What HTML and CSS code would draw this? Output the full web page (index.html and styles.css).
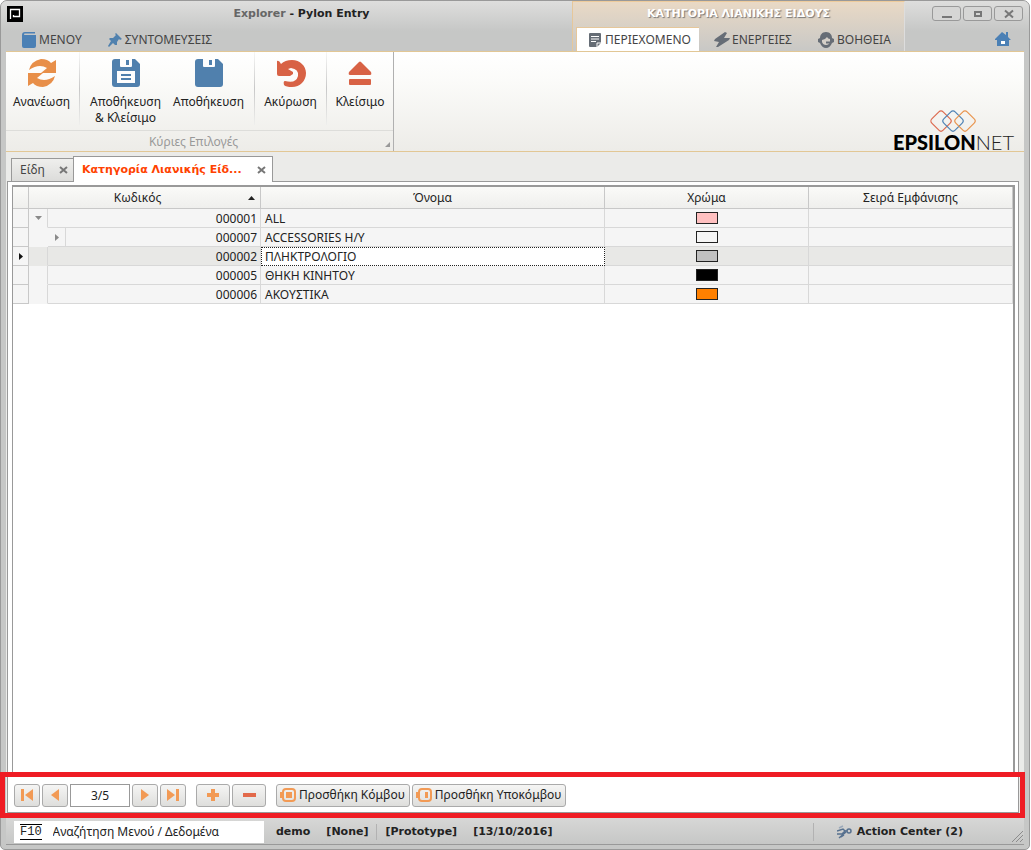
FILE: index.html
```html
<!DOCTYPE html>
<html lang="el">
<head>
<meta charset="utf-8">
<title>Explorer - Pylon Entry</title>
<link rel="stylesheet" href="styles.css">
</head>
<body>
<div class="window">
  <header class="titlebar">
    <div class="title-main">
      <div class="caption">
        <svg class="app-icon" width="16" height="16" viewBox="0 0 16 16"><rect width="16" height="16" fill="#000"/><path d="M3.500 13V3.500H12.500V10.500H6.500V9" fill="none" stroke="#fff" stroke-width="1.300"/></svg>
        <h1 class="title"><span class="title-dim">Explorer</span> - Pylon Entry</h1>
      </div>
      <nav class="tabs tabs-main">
        <button class="tab"><svg width="14" height="16" viewBox="0 0 14 16" fill="#4b80b5"><path d="M3 0H13V1.500H3C1.500 1.500 1.500 3 3 3H14V14Q14 16 12 16H2Q0 16 0 14V3Q0 0 3 0Z"/></svg>ΜΕΝΟΥ</button>
        <button class="tab"><svg width="14" height="16" viewBox="0 0 14 16" fill="#5081ae"><path d="M8 1L14 7 12 8 11 7 9 10 9 13 7 13 5 11 1 15 0 14 3 9 1 7 2 6 5 6 8 3 7 2Z"/></svg>ΣΥΝΤΟΜΕΥΣΕΙΣ</button>
      </nav>
    </div>
    <div class="context">
      <div class="context-title">ΚΑΤΗΓΟΡΙΑ ΛΙΑΝΙΚΗΣ ΕΙΔΟΥΣ</div>
      <nav class="tabs tabs-context">
        <button class="tab tab-active"><svg width="14" height="16" viewBox="0 0 14 16"><path d="M2 1H12Q13 1 13 2V11L9 15H2Q1 15 1 14V2Q1 1 2 1Z" fill="#666d76"/><path d="M3 4.500H11M3 7H11M3 9.500H8M9 15V11H13" stroke="#fff" fill="none"/></svg>ΠΕΡΙΕΧΟΜΕΝΟ</button>
        <button class="tab tab-energy"><svg width="16" height="16" viewBox="0 0 16 16" fill="#666d76"><path d="M11 0L13 1L10 6L16 6L15 8L4 15L2 15L5 10L0 9L1 7Z"/></svg>ΕΝΕΡΓΕΙΕΣ</button>
        <button class="tab"><svg width="16" height="16" viewBox="0 0 16 16"><path d="M8 0C12 0 14 3 14 6L16 7V10L14 11Q12 16 8 16Q4 16 2 11L0 10V7L2 6C2 3 4 0 8 0Z" fill="#666d76"/><path d="M4 8Q7 8 9 5Q10 7 12 7V10Q11 13 8 13Q5 13 4 10Z" fill="#d4cfc8"/><path d="M8 10.500H13" stroke="#666d76" stroke-width="2"/></svg>ΒΟΗΘΕΙΑ</button>
      </nav>
    </div>
    <div class="title-end">
      <div class="window-buttons">
        <button class="winbtn" aria-label="Ελαχιστοποίηση"><svg width="10" height="10"><path d="M0 8H10" stroke="#777" stroke-width="2"/></svg></button>
        <button class="winbtn" aria-label="Μεγιστοποίηση"><svg width="10" height="10"><rect x="2" y="3" width="6" height="4" fill="none" stroke="#777" stroke-width="2"/></svg></button>
        <button class="winbtn" aria-label="Κλείσιμο παραθύρου"><svg width="10" height="10"><path d="M1 1.500L9 8.500M9 1.500L1 8.500" stroke="#777" stroke-width="2"/></svg></button>
      </div>
      <button class="home" aria-label="Αρχική"><svg width="16" height="14" viewBox="0 0 16 14"><path d="M7 0L11 3V0H13V5L16 8H14V14H2V8H0V7Z" fill="#4b80b5"/><rect x="6" y="9" width="4" height="3" fill="#fff"/></svg></button>
    </div>
  </header>

  <section class="ribbon">
    <div class="ribbon-group">
      <div class="commands">
        <div class="cmd-set set-refresh"><button class="cmd">
          <svg width="28" height="28" viewBox="0 0 28 28" fill="#e88f49"><path d="M1 11Q3 2 13 0Q20 0 23 4L28 1V14H13L19 9Q11 4 1 11Z"/><path d="M27 17Q25 26 15 28Q8 28 5 24L0 27V14H15L9 19Q17 24 27 17Z"/></svg>
          <span>Ανανέωση</span></button></div>
        <div class="cmd-set set-save">
          <button class="cmd"><svg width="28" height="28" viewBox="0 0 28 28"><path d="M3 0H23L28 5V25Q28 28 25 28H3Q0 28 0 25V3Q0 0 3 0Z" fill="#5080ad"/><path d="M8 0H20V7Q20 8 19 8H9Q8 8 8 7ZM5 12H23V24H5Z" fill="#fdfdfd"/><path d="M14 1H17V6H14ZM9 15H19V17H9ZM9 19H19V21H9Z" fill="#5080ad"/></svg><span>Αποθήκευση<br>&amp; Κλείσιμο</span></button>
          <button class="cmd"><svg width="28" height="28" viewBox="0 0 28 28"><path d="M3 0H23L28 5V25Q28 28 25 28H3Q0 28 0 25V3Q0 0 3 0Z" fill="#5080ad"/><path d="M8 0H20V7Q20 8 19 8H9Q8 8 8 7Z" fill="#fdfdfd"/><path d="M14 1H17V6H14Z" fill="#5080ad"/></svg><span>Αποθήκευση</span></button>
        </div>
        <div class="cmd-set set-undo"><button class="cmd"><svg width="30" height="28" viewBox="0 0 30 28"><path d="M1 2Q3 1 5 5Q9 1 16 1C24 1 30 7 30 14C30 22 24 28 16 28Q10 28 8 26Q7 22 9 22Q20 25 22 17Q23 10 15 9L12 10L17 13V15L14 17H3Q1 17 1 15Z" fill="#d86245"/></svg><span>Ακύρωση</span></button></div>
        <div class="cmd-set set-close"><button class="cmd"><svg width="24" height="28" viewBox="0 0 24 28" fill="#d86245"><path d="M11 3Q12 2 13 3L23 13Q24 16 22 16H2Q0 16 1 13Z"/><rect x="1" y="20" width="22" height="6" rx="1"/></svg><span>Κλείσιμο</span></button></div>
      </div>
      <div class="group-caption"><span>Κύριες Επιλογές</span><svg class="launcher" width="5" height="5"><path d="M5 0V5H0Z" fill="#999"/></svg></div>
    </div>
    <div class="brand">
      <svg width="48" height="24" viewBox="0 0 48 24" fill="none" stroke-width="1.200"><rect x="4" y="4" width="16" height="16" rx="3" transform="rotate(45 12 12)" stroke="#dd6b50"/><rect x="16" y="4" width="16" height="16" rx="3" transform="rotate(45 24 12)" stroke="#4f83b5"/><rect x="28" y="4" width="16" height="16" rx="3" transform="rotate(45 36 12)" stroke="#e9954f"/></svg>
      <div class="brand-name">EPSILON<span>NET</span></div>
    </div>
  </section>

  <main class="workspace">
    <div class="doc-tabs">
      <div class="doc-tab"><span>Είδη</span><button class="tab-close" aria-label="Κλείσιμο Είδη"><svg width="9" height="8"><path d="M1 1L8 7M8 1L1 7" stroke="#777" stroke-width="2"/></svg></button></div>
      <div class="doc-tab doc-tab-active"><span>Κατηγορία Λιανικής Είδ...</span><button class="tab-close" aria-label="Κλείσιμο Κατηγορία"><svg width="9" height="8"><path d="M1 1L8 7M8 1L1 7" stroke="#777" stroke-width="2"/></svg></button></div>
    </div>
    <div class="document">
      <div class="grid-frame">
        <table class="grid">
          <colgroup><col class="c-ind"><col class="c-tree"><col class="c-sub"><col class="c-code"><col><col class="c-wide"><col class="c-wide"></colgroup>
          <thead><tr><th></th><th colspan="3" class="sorted">Κωδικός<svg class="sort" width="7" height="4"><path d="M0 4L3.500 0L7 4Z" fill="#222"/></svg></th><th>Όνομα</th><th>Χρώμα</th><th>Σειρά Εμφάνισης</th></tr></thead>
          <tbody>
            <tr><td class="ind"></td><td class="tree edge"><svg width="7" height="4"><path d="M0 0H7L3.500 4Z" fill="#8a8a8a"/></svg></td><td colspan="2" class="code">000001</td><td>ALL</td><td class="color"><span class="swatch pink"></span></td><td></td></tr>
            <tr><td class="ind"></td><td class="tree"></td><td class="sub"><svg width="4" height="7"><path d="M0 0V7L4 3.500Z" fill="#8a8a8a"/></svg></td><td class="code">000007</td><td>ACCESSORIES Η/Υ</td><td class="color"><span class="swatch"></span></td><td></td></tr>
            <tr class="selected"><td class="ind"><svg width="4" height="7"><path d="M0 0V7L4 3.500Z" fill="#111"/></svg></td><td class="tree edge"></td><td colspan="2" class="code">000002</td><td class="focused">ΠΛΗΚΤΡΟΛΟΓΙΟ</td><td class="color"><span class="swatch silver"></span></td><td></td></tr>
            <tr><td class="ind"></td><td class="tree edge"></td><td colspan="2" class="code">000005</td><td>ΘΗΚΗ ΚΙΝΗΤΟΥ</td><td class="color"><span class="swatch black"></span></td><td></td></tr>
            <tr><td class="ind"></td><td class="tree edge"></td><td colspan="2" class="code">000006</td><td>ΑΚΟΥΣΤΙΚΑ</td><td class="color"><span class="swatch orange"></span></td><td></td></tr>
          </tbody>
        </table>
      </div>
      <div class="navigator">
        <button class="nav" aria-label="Πρώτη"><svg width="12" height="12" fill="#f29a55"><path d="M0 0H3V12H0ZM12 0V12L4 6Z"/></svg></button>
        <button class="nav" aria-label="Προηγούμενη"><svg width="12" height="12" fill="#f29a55"><path d="M10 0V12L2 6Z"/></svg></button>
        <input class="position" value="3/5" aria-label="Εγγραφή">
        <button class="nav" aria-label="Επόμενη"><svg width="12" height="12" fill="#f29a55"><path d="M2 0V12L10 6Z"/></svg></button>
        <button class="nav" aria-label="Τελευταία"><svg width="12" height="12" fill="#f29a55"><path d="M0 0V12L8 6ZM9 0H12V12H9Z"/></svg></button>
        <button class="nav wide first" aria-label="Προσθήκη"><svg width="14" height="14"><path d="M7 1V13M1 7H13" stroke="#f29a55" stroke-width="4"/></svg></button>
        <button class="nav wide" aria-label="Διαγραφή"><svg width="14" height="14"><path d="M1 7H14" stroke="#e2694a" stroke-width="4"/></svg></button>
        <button class="nav labelled first"><svg width="16" height="14" fill="none" stroke="#f29a55" stroke-width="2"><rect x="3" y="1" width="12" height="12" rx="3"/><rect x="6" y="4" width="6" height="6" fill="#f29a55" stroke="none"/><path d="M1 4V10"/></svg>Προσθήκη Κόμβου</button>
        <button class="nav labelled"><svg width="16" height="14" fill="none" stroke="#f29a55" stroke-width="2"><rect x="3" y="1" width="12" height="12" rx="3"/><rect x="9" y="4" width="3" height="6" fill="#f29a55" stroke="none"/><path d="M1 4V10"/></svg>Προσθήκη Υποκόμβου</button>
      </div>
    </div>
  </main>

  <footer class="status">
    <label class="search"><kbd>F10</kbd><input value="Αναζήτηση Μενού / Δεδομένα"></label>
    <span class="s-user">demo</span><span class="s-none">[None]</span><span class="s-proto">[Prototype]</span><span>[13/10/2016]</span>
    <button class="action"><svg width="15" height="14" viewBox="0 0 15 14" fill="none" stroke="#57718f" stroke-width="1.500"><path d="M2 3L6 1" stroke="#9aa9ba"/><path d="M0 6L6 4L8 6L5 9L0 9M2 13L9 7M4 12L7 10"/><circle cx="12" cy="6" r="2"/><path d="M8 6H10"/></svg>Action Center (2)</button>
    <svg class="grip" width="11" height="11"><path d="M0 11L11 0M4 11L11 4M8 11L11 8" stroke="#8c8c8c"/></svg>
  </footer>
</div>
</body>
</html>
```
FILE: styles.css
```css
* { box-sizing: border-box; }
body { margin: 0; background: #fff; color: #222; font: 12px/16px "Noto Sans", sans-serif; }
button, input { font: inherit; color: inherit; margin: 0; padding: 0; border: 0; background: none; }
svg { display: block; flex: none; }
.window { display: flex; flex-direction: column; min-height: 100vh; margin-right: 1px; padding: 0 5px 4px; border: 1px solid #999; border-radius: 7px 7px 5px 5px; background: #c6c7c6; }

.titlebar { display: flex; height: 50px; margin: 0 -5px; padding: 0 5px; background: linear-gradient(#dededd, #c6c7c6 60%); border-radius: 6px 6px 0 0; }
.title-main { flex: 1; display: flex; flex-direction: column; justify-content: space-between; }
.caption { display: flex; align-items: center; height: 26px; padding-left: 1px; }
.title { flex: 1; margin: 0; padding-left: 8px; text-align: center; font: bold 11px/16px "DejaVu Sans", sans-serif; }
.title-dim { color: #666; }
.tabs { display: flex; height: 24px; }
.tab { display: flex; align-items: center; gap: 3px; height: 24px; padding-top: 2px; color: #444; white-space: nowrap; }
.tabs-main { gap: 26px; padding-left: 16px; }
.context { display: flex; flex-direction: column; justify-content: space-between; width: 333px; border-left: 1px solid #e6c79a; border-right: 1px solid #ddd; border-top: 1px solid #eecb9b; background: linear-gradient(#e9d9c5, #c8c8c6); }
.context-title { height: 25px; text-align: center; color: #fff; font: bold 11px/24px "DejaVu Sans", sans-serif; text-shadow: 1px 1px 1px #777; }
.tabs-context { padding-left: 3px; gap: 12px; }
.tab-active { width: 123px; padding: 1px 0 0 11px; background: #fff; border-top: 1px solid #e6c79a; border-left: 1px solid #e6c79a; }
.tab-energy { width: 95px; padding-left: 3px; gap: 2px; }
.title-end { display: flex; flex-direction: column; align-items: flex-end; width: 119px; }
.window-buttons { display: flex; gap: 2px; padding: 5px 1px 0 0; }
.winbtn { display: grid; place-items: center; width: 29px; height: 15px; border: 1px solid #999; border-radius: 3px; background: #d6d6d5; }
.home { margin: 11px 13px 0 0; }

.ribbon { display: flex; justify-content: space-between; height: 101px; border: solid #e2c795; border-width: 1px 0; background: linear-gradient(#fff, #fbfbf9 30%, #edece8); }
.ribbon-group { width: 388px; border-right: 1px solid #b0b0b0; }
.commands { display: flex; height: 79px; border-bottom: 1px solid #ddddda; }
.cmd-set { display: flex; justify-content: center; height: 73px; border-right: 1px solid; border-image: linear-gradient(#f8f8f7, #c8c8c8 50%, #f0f0ee) 1; }
.set-refresh { width: 74px; padding-right: 2px; }
.set-save { width: 175px; }
.set-undo { width: 72px; }
.set-close { flex: 1; border: 0; }
.cmd { display: flex; flex-direction: column; align-items: center; gap: 7px; min-width: 83px; padding-top: 7px; white-space: nowrap; }
.set-refresh .cmd, .set-undo .cmd, .set-close .cmd { min-width: 0; }
.group-caption { position: relative; height: 20px; padding-right: 12px; line-height: 22px; text-align: center; color: #999; }
.launcher { position: absolute; right: 3px; bottom: 4px; }
.brand { display: flex; flex-direction: column; align-items: center; padding: 57px 10px 0 0; }
.brand-name { font: 900 20px/18px Lato, sans-serif; color: #000; }
.brand-name span { font-weight: 300; color: #222; }

.workspace { flex: 1; display: flex; flex-direction: column; padding: 4px 5px 0 1px; background: #ebebe9; }
.doc-tabs { display: flex; align-items: flex-end; height: 25px; padding-left: 4px; }
.doc-tab { display: flex; align-items: center; justify-content: space-between; width: 62px; height: 23px; padding: 0 5px 0 8px; border: 1px solid #999; border-width: 1px 0 0 1px; background: linear-gradient(#efefed, #dcdcda); color: #444; }
.doc-tab-active { position: relative; width: 200px; height: 26px; margin-bottom: -1px; padding: 0 6px 0 8px; border-width: 1px 1px 0; background: #fff; color: #ff4200; font: bold 11px/16px "DejaVu Sans", sans-serif; }
.tab-close { flex: none; }
.document { flex: 1; display: flex; flex-direction: column; border: 1px solid #999; background: #fff; }
.grid-frame { flex: 1; margin: 3px 3px 0 4px; border: solid #999; border-width: 2px 2px 0 1px; }
.grid { width: 100%; table-layout: fixed; border-collapse: separate; border-spacing: 0; }
.c-ind { width: 16px; }
.c-tree { width: 19px; }
.c-sub { width: 18px; }
.c-code { width: 195px; }
.c-wide { width: 20.4%; }
.grid th { position: relative; height: 22px; padding: 0; border: solid #c8c8c8; border-width: 0 1px 1px 0; background: linear-gradient(#fafaf8, #efefed); font-weight: normal; text-align: center; }
.grid .sorted { padding-right: 14px; }
.sort { position: absolute; right: 5px; top: 9px; }
.grid td { height: 19px; padding: 2px 4px 0; border: solid #d8d8d8; border-width: 0 1px 1px 0; background: #f5f5f5; line-height: 16px; white-space: nowrap; }
.grid .code { padding: 2px 3px 0; text-align: right; }
.grid .tree { border-color: transparent; }
.grid .edge { border-right-color: #d8d8d8; }
.grid td svg { margin: 0 auto; }
.grid .ind { padding: 0; border-color: #c8c8c8; }
.grid .tree, .grid .sub, .grid .color { padding: 0; }
.grid .selected td { background: #e8e8e6; }
.grid .selected .ind { background: #f5f5f5; }
.grid .selected .focused { padding: 1px 3px 0; background: #fff; border: 1px dotted #222; }
.swatch { display: block; width: 22px; height: 12px; margin: 0 auto; border: 1px solid #222; }
.pink { background: #ffc0c0; }
.silver { background: #c0c0c0; }
.black { background: #000; }
.orange { background: #ff8000; }

.navigator { position: relative; display: flex; align-items: center; gap: 2px; height: 36px; padding: 1px 0 0 6px; border-top: 1px solid #bbb; background: #fff; }
.navigator::after { content: ""; position: absolute; inset: -5px -7px -6px -8px; border: 5px solid #ef1c24; pointer-events: none; }
.nav { display: flex; align-items: center; justify-content: center; width: 26px; height: 23px; border: 1px solid #aaa; border-radius: 3px; background: linear-gradient(#f5f5f4, #dededc); white-space: nowrap; }
.wide { width: 34px; }
.labelled { width: auto; gap: 3px; padding: 0 4px 0 3px; }
.first { margin-left: 8px; }
.position { width: 60px; height: 23px; border: 1px solid #999; text-align: center; background: #fff; }

.status { display: flex; align-items: center; height: 32px; padding: 6px 1px 0 8px; border-bottom: 1px solid #999; background: linear-gradient(#dadad9, #c6c7c6); font: bold 11px/16px "DejaVu Sans", sans-serif; white-space: nowrap; }
.search { display: flex; align-items: center; width: 250px; height: 22px; margin-right: 12px; padding-left: 6px; background: #fff; font: 12px/16px "Noto Sans", sans-serif; }
kbd { height: 16px; border: solid #000; border-width: 1px 0; font: 12px/14px "Liberation Mono", monospace; }
.search input { flex: 1; min-width: 0; margin-left: 11px; }
.s-user { margin-right: 16px; }
.s-none { margin-right: 8px; padding-right: 8px; border-right: 1px solid #b2b2b2; }
.s-proto { margin-right: 16px; }
.action { display: flex; align-items: center; gap: 5px; height: 18px; margin-left: auto; padding-left: 23px; border-left: 1px solid #b2b2b2; }
.grip { align-self: flex-end; margin: 0 0 2px 49px; }
```
